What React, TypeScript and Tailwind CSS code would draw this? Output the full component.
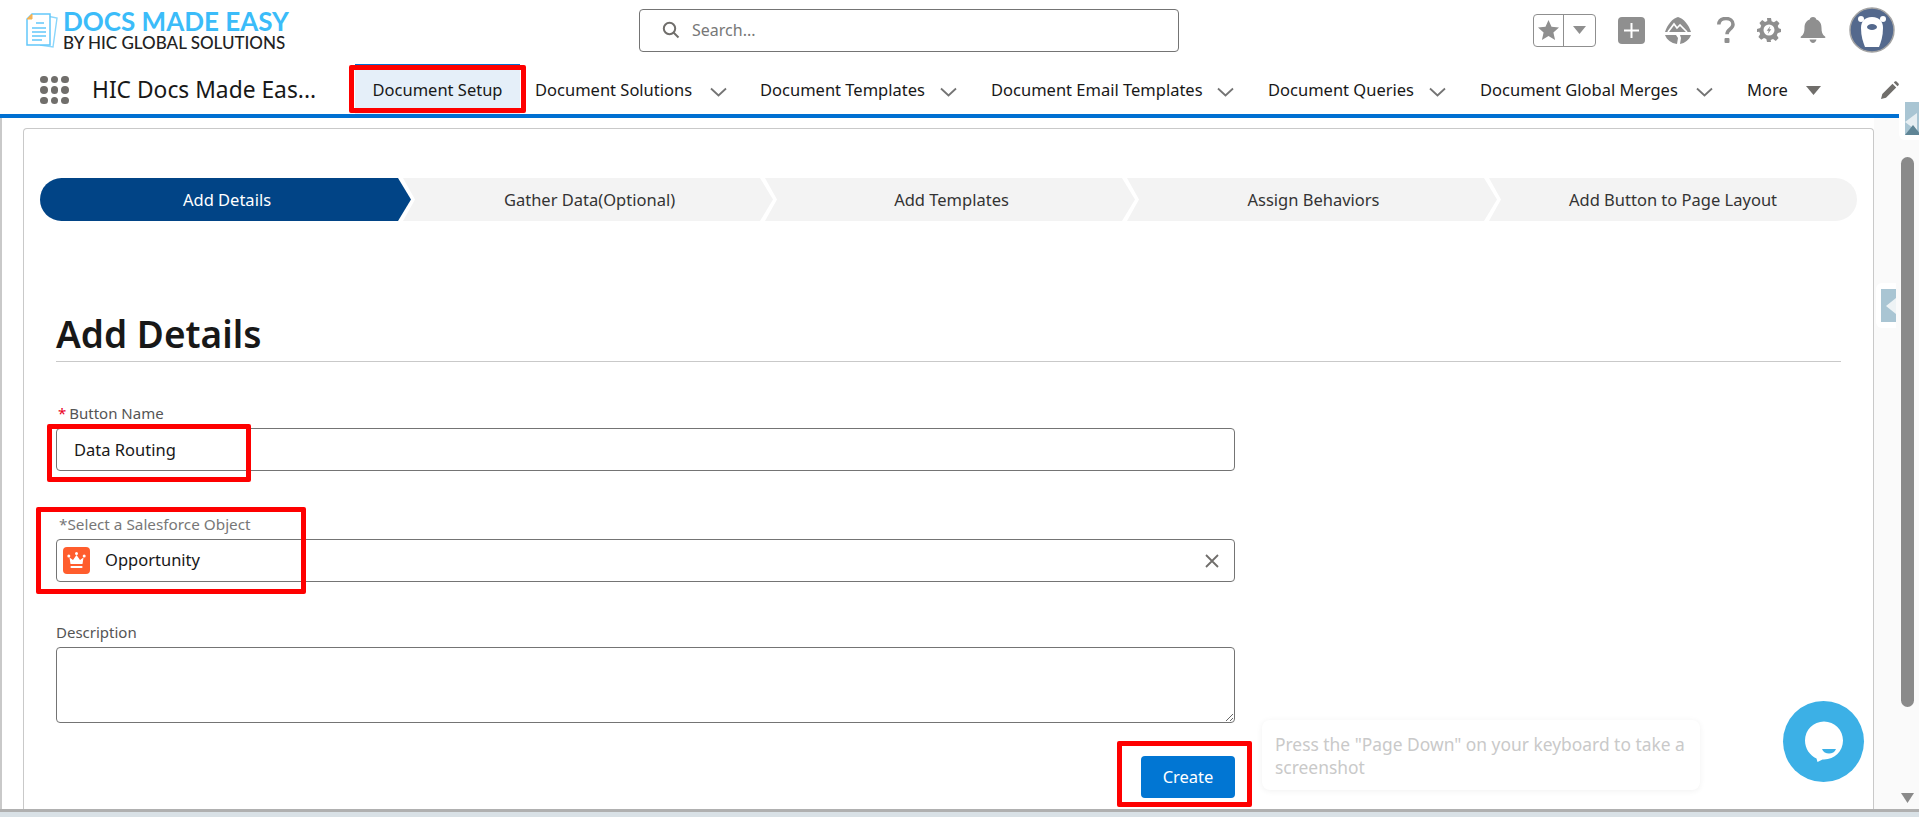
import { ReactNode } from "react";

const navItems = [
  { label: "Document Solutions", className: "w-[225px] gap-[18px]" },
  { label: "Document Templates", className: "w-[231px] gap-[15px]" },
  { label: "Document Email Templates", className: "w-[277px] gap-[14px]" },
  { label: "Document Queries", className: "w-[212px] gap-[15px]" },
  { label: "Document Global Merges", className: "w-[267px] gap-[18px]" },
];

function Chevron() {
  return (
    <svg width="17" height="10" viewBox="0 0 17 10" className="mt-[3px] shrink-0">
      <path d="M1 1.500l7.500 7 7.500-7" fill="none" stroke="#747474" strokeWidth="1.800" />
    </svg>
  );
}

function RedBox({ className }: { className: string }) {
  return <div className={`absolute border-[5px] border-[#fe0000] rounded-[2px] pointer-events-none ${className}`} />;
}

function LogoMark() {
  return (
    <svg width="34" height="37" viewBox="0 0 34 37" className="shrink-0">
      <path d="M22 4l10 2-4 29-13-2" fill="#fff" stroke="#8ad6fb" strokeWidth="1.400" />
      <path d="M7 2h18v31H2V7z" fill="#fff" stroke="#63c8fa" strokeWidth="1.500" />
      <path d="M7 2v5H2z" fill="#f3b356" stroke="#f3b356" />
      <path d="M11 11h8M7 16h14M7 20h14M7 24h14M7 28h10" stroke="#63c8fa" strokeWidth="1.300" />
    </svg>
  );
}

function TopIcons() {
  return (
    <div className="flex items-center">
      <div className="flex items-center w-[63px] h-[33px] border border-[#8f8f8f] rounded-[4px]">
        <div className="w-[30px] h-full flex items-center justify-center border-r border-[#8f8f8f]">
          <svg width="21" height="20" viewBox="0 0 21 20">
            <path d="M10.500 0l3 6.800 7.500.7-5.600 5 1.700 7.500-6.600-3.900L3.900 20l1.700-7.500-5.600-5 7.500-.7z" fill="#8f8f8f" />
          </svg>
        </div>
        <div className="flex-1 flex items-center justify-center">
          <svg width="13" height="8" viewBox="0 0 13 8">
            <path d="M0 0h13L6.500 8z" fill="#8f8f8f" />
          </svg>
        </div>
      </div>
      <div className="ml-[22px] w-[27px] h-[27px] rounded-[4px] bg-[#8f8f8f] flex items-center justify-center">
        <svg width="17" height="17" viewBox="0 0 17 17">
          <path d="M8.500 1v15M1 8.500h15" stroke="#fff" strokeWidth="2" />
        </svg>
      </div>
      <svg width="26" height="27" viewBox="0 0 26 27" className="ml-[20px]">
        <path d="M13 0c5 1 11 8 13 15H0C2 8 8 1 13 0z" fill="#8f8f8f" />
        <path d="M3 15l6-8 3 4 3-3 7 7" fill="none" stroke="#fff" strokeWidth="1.700" />
        <path d="M0 18h11l2 3-1 6c-6-1-10-4-12-9zM26 18H15l1 3-1 6c5-1 9-4 11-9z" fill="#8f8f8f" />
      </svg>
      <svg width="18" height="27" viewBox="0 0 18 27" className="ml-[26px]">
        <path d="M1.800 7.500C2 3.500 5 1.500 9 1.500s7 2.300 7 5.800c0 5-6 4.800-6 10" fill="none" stroke="#8f8f8f" strokeWidth="3.500" />
        <rect x="7.500" y="21" width="5" height="5" rx="1" fill="#8f8f8f" />
      </svg>
      <svg width="24" height="24" viewBox="0 0 24 24" className="ml-[22px]">
        <path
          d="M10 0h4l.6 3.200 2.300 1 2.800-1.800 2.800 2.800-1.800 2.800 1 2.300L24 10.900v3.200l-3.200.9-1 2.300 1.800 2.800-2.800 2.800-2.800-1.800-2.300 1L14 24h-4l-.7-3.100-2.300-1-2.800 1.800-2.800-2.800 1.800-2.800-1-2.300L0 14.100v-3.200l3.200-.9 1-2.300L2.400 4.900l2.800-2.800L8 3.900l2.300-1z"
          fill="#8f8f8f"
        />
        <circle cx="12" cy="12" r="5.500" fill="#fff" />
        <path d="M13.300 8l-3.600 4.800h2l-1 3.200 3.600-4.800h-2z" fill="#8f8f8f" />
      </svg>
      <svg width="26" height="26" viewBox="0 0 26 26" className="ml-[19px]">
        <path d="M13 0c2 0 3 1.200 3.300 2.600C20 4 21.500 7 21.500 11c0 4 .8 6.500 3.500 8.500.8.600.5 1.500-.5 1.500h-23c-1 0-1.300-.9-.5-1.500C3.700 17.500 4.500 15 4.500 11c0-4 1.500-7 5.200-8.400C10 1.200 11 0 13 0z" fill="#8f8f8f" />
        <path d="M9.500 22.500h7c-.5 2-2 3.500-3.500 3.500s-3-1.500-3.500-3.500z" fill="#8f8f8f" />
      </svg>
      <svg width="46" height="46" viewBox="0 0 46 46" className="ml-[23px]">
        <circle cx="23" cy="23" r="22" fill="#54698d" stroke="#a3a3a3" strokeWidth="1.500" />
        <circle cx="12" cy="12" r="3" fill="#fff" />
        <circle cx="34" cy="12" r="3" fill="#fff" />
        <path d="M23 10c8 0 11 5 11 11 0 8-2 14-4 19H16c-2-5-4-11-4-19 0-6 3-11 11-11z" fill="#fff" />
        <ellipse cx="23" cy="20" rx="5" ry="3" fill="#54698d" />
      </svg>
    </div>
  );
}

function Field({ label, children }: { label: ReactNode; children: ReactNode }) {
  return (
    <div>
      <div className="h-[20px] flex items-center text-[15px] text-[#555]">{label}</div>
      <div className="mt-[5px]">{children}</div>
    </div>
  );
}

const steps = [
  { label: "Add Details", className: "w-[371px] pl-[3px] bg-[#014486] text-white rounded-l-[22px] [clip-path:polygon(0_0,358px_0,100%_50%,358px_100%,0_100%)]" },
  { label: "Gather Data(Optional)", className: "w-[370px] pl-[3px] -ml-[8px] bg-[#f3f3f3] text-[#333] [clip-path:polygon(0_0,357px_0,100%_50%,357px_100%,0_100%,12px_50%)]" },
  { label: "Add Templates", className: "w-[370px] pl-[3px] -ml-[8px] bg-[#f3f3f3] text-[#333] [clip-path:polygon(0_0,357px_0,100%_50%,357px_100%,0_100%,12px_50%)]" },
  { label: "Assign Behaviors", className: "w-[370px] pl-[3px] -ml-[8px] bg-[#f3f3f3] text-[#333] [clip-path:polygon(0_0,357px_0,100%_50%,357px_100%,0_100%,12px_50%)]" },
  { label: "Add Button to Page Layout", className: "w-[368px] -ml-[8px] bg-[#f3f3f3] text-[#333] rounded-r-[22px] [clip-path:polygon(0_0,100%_0,100%_100%,0_100%,12px_50%)]" },
];

export default function App() {
  return (
    <div className="relative w-full h-[817px] overflow-hidden flex flex-col bg-white text-[#181818] font-['Noto_Sans','Open_Sans',sans-serif]">
      {/* top bar */}
      <header className="h-[60px] shrink-0 flex items-center pl-[25px] pr-[24px]">
        <div className="flex items-center w-[614px]">
          <LogoMark />
          <div className="ml-[4px]">
            <div className="text-[26px] leading-[25px] font-bold text-[#3bbcf9] whitespace-nowrap font-['Lato','Noto_Sans',sans-serif]">DOCS MADE EASY</div>
            <div className="text-[17px] leading-[17px] font-medium text-[#222] whitespace-nowrap font-['Lato','Noto_Sans',sans-serif]">BY HIC GLOBAL SOLUTIONS</div>
          </div>
        </div>
        <div className="w-[540px] h-[43px] border border-[#747474] rounded-[4px] flex items-center pl-[22px]">
          <svg width="18" height="18" viewBox="0 0 18 18" className="shrink-0">
            <circle cx="7.500" cy="7.500" r="5.700" fill="none" stroke="#706e6b" strokeWidth="2" />
            <path d="M11.500 11.500l5 5" stroke="#706e6b" strokeWidth="2" />
          </svg>
          <input placeholder="Search..." className="ml-[12px] flex-1 outline-none text-[16px] placeholder:text-[#777]" />
        </div>
        <div className="flex-1 flex justify-end">
          <TopIcons />
        </div>
      </header>

      {/* app nav */}
      <nav className="h-[58px] shrink-0 flex items-center pt-[6px] pl-[40px] border-b-4 border-[#0070d2]">
        <div className="grid grid-cols-3 gap-[3px] w-[29px] shrink-0">
          {Array.from({ length: 9 }).map((_, i) => (
            <span key={i} className="w-[7.500px] h-[7.500px] rounded-full bg-[#706e6b]" />
          ))}
        </div>
        <div className="ml-[23px] w-[263px] text-[22.800px] whitespace-nowrap">HIC Docs Made Eas...</div>
        <div className="relative self-end h-[50px] w-[165px] mr-[15px] flex items-center justify-center bg-[#e5eff9] border-t-2 border-[#0070d2] text-[16.500px]">
          Document Setup
          <RedBox className="-left-[6px] -right-[6px] -top-[1px] bottom-[1px]" />
        </div>
        {navItems.map((item) => (
          <div key={item.label} className={`${item.className} shrink-0 flex items-center text-[16.500px] whitespace-nowrap`}>
            {item.label}
            <Chevron />
          </div>
        ))}
        <div className="flex items-center text-[16.500px]">
          More
          <svg width="15" height="9" viewBox="0 0 15 9" className="ml-[18px]">
            <path d="M0 0h15L7.500 9z" fill="#706e6b" />
          </svg>
        </div>
        <svg width="18" height="18" viewBox="0 0 18 18" className="ml-[60px]">
          <path d="M0 18l1.300-5L11.500 2.800l3.700 3.700L5 16.700zM12.800 1.500l1-1c.5-.5 1.200-.5 1.700 0l2 2c.5.5.5 1.200 0 1.700l-1 1z" fill="#706e6b" />
        </svg>
      </nav>

      {/* page body */}
      <main className="flex-1 min-h-0 flex">
        <div className="w-[1874px] shrink-0 pt-[10px] pl-[21px] border-l-2 border-[#c9c9c9]">
          <div className="h-full pt-[49px] pl-[16px] pr-[16px] border border-b-0 border-[#c9c9c9] rounded-t-[4px]">
            <div className="flex h-[43px]">
              {steps.map((step) => (
                <div key={step.label} className={`shrink-0 flex items-center justify-center pt-[2px] text-[16.500px] ${step.className}`}>
                  {step.label}
                </div>
              ))}
            </div>

            <div className="pl-[16px] pr-[16px]">
              <h1 className="mt-[85px] h-[56px] border-b border-[#c9c9c9] text-[37px] leading-[56px] font-semibold">Add Details</h1>

              <div className="w-[1179px]">
                <div className="mt-[41px]">
                  <Field
                    label={
                      <span className="pl-[2px]">
                        <span className="text-[#ea001e] mr-[3px]">*</span>Button Name
                      </span>
                    }
                  >
                    <div className="relative">
                      <input defaultValue="Data Routing" className="w-full h-[43px] border border-[#747474] rounded-[4px] pl-[17px] text-[16.500px] outline-none" />
                      <RedBox className="-left-[9px] top-[-4px] w-[204px] h-[58px]" />
                    </div>
                  </Field>
                </div>

                <div className="relative mt-[43px]">
                  <Field label={<span className="pl-[3px] text-[#777] text-[15.300px]">*Select a Salesforce Object</span>}>
                    <div className="h-[43px] border border-[#747474] rounded-[4px] flex items-center pl-[6px] pr-[15px]">
                      <span className="w-[27px] h-[27px] rounded-[4px] bg-[#ff5d2d] flex items-center justify-center">
                        <svg width="19" height="19" viewBox="0 0 19 19">
                          <circle cx="9.500" cy="2.500" r="1.500" fill="#fff" />
                          <circle cx="1.800" cy="5" r="1.500" fill="#fff" />
                          <circle cx="17.200" cy="5" r="1.500" fill="#fff" />
                          <path d="M2.500 6.500l3.500 2.500 3.500-5 3.500 5 3.500-2.500-1 6.500H3.500z" fill="#fff" />
                          <rect x="3.500" y="15" width="12" height="2" rx=".8" fill="#fff" />
                        </svg>
                      </span>
                      <span className="ml-[15px] flex-1 text-[16.500px]">Opportunity</span>
                      <svg width="14" height="14" viewBox="0 0 14 14">
                        <path d="M1 1l12 12M13 1L1 13" stroke="#706e6b" strokeWidth="1.800" />
                      </svg>
                    </div>
                  </Field>
                  <RedBox className="-left-[20px] -top-[7px] w-[270px] h-[87px]" />
                </div>

                <div className="mt-[40px]">
                  <Field label="Description">
                    <textarea className="block w-full h-[76px] border border-[#747474] rounded-[4px] outline-none" />
                  </Field>
                </div>

                <div className="mt-[33px] flex justify-end">
                  <div className="relative">
                    <button className="w-[94px] h-[42px] pt-[1px] bg-[#0176d3] text-white text-[16.500px] rounded-[4px]">Create</button>
                    <RedBox className="-left-[24px] -right-[17px] -top-[15px] -bottom-[9px]" />
                  </div>
                </div>
              </div>
            </div>
          </div>
        </div>

        {/* scrollbar strip */}
        <div className="flex-1 flex flex-col bg-[#fafafa] pl-[27px] pt-[39px]">
          <div className="w-[13px] h-[550px] rounded-full bg-[#8a8a8a]" />
          <svg width="13" height="10" viewBox="0 0 13 10" className="mt-[86px]">
            <path d="M0 0h13L6.500 10z" fill="#8a8a8a" />
          </svg>
        </div>
      </main>

      <div className="h-[8px] shrink-0 bg-[#d9e1e6] border-t-[3px] border-[#b0b0b0]" />

      {/* floating bits */}
      <div className="absolute left-[1899px] top-[97px] w-[20px] h-[43px] bg-white rounded-l-[6px] pl-[6px] py-[5px]">
        <div className="relative h-full bg-[#a9c5d3] overflow-hidden">
          <div className="absolute left-0 top-[11px] w-0 h-0 border-y-[9px] border-y-transparent border-r-[12px] border-r-[#e6eef2]" />
          <div className="absolute left-0 bottom-0 w-0 h-0 border-x-[8px] border-x-transparent border-b-[10px] border-b-[#5f8596]" />
        </div>
      </div>
      <div className="absolute left-[1876px] top-[283px] w-[20px] h-[45px] bg-white rounded-l-[6px] pl-[5px] py-[6px]">
        <div className="h-full bg-[#a9c5d3] flex items-center justify-end">
          <div className="w-0 h-0 border-y-[8px] border-y-transparent border-r-[10px] border-r-[#eef3f5]" />
        </div>
      </div>

      <div className="absolute left-[1262px] top-[720px] w-[438px] h-[70px] rounded-[8px] bg-white shadow-[0_1px_6px_rgba(0,0,0,0.06)] pl-[13px] pt-[13px] text-[17.400px] leading-[23px] text-[#c9c9c9]">
        Press the "Page Down" on your keyboard to take a screenshot
      </div>

      <div className="absolute left-[1783px] top-[701px] w-[81px] h-[81px] rounded-full bg-[#3cb0e6] flex items-center justify-center">
        <svg width="40" height="42" viewBox="0 0 40 42">
          <path d="M20 .5c10.500 0 19 8.500 19 19s-8.500 19-19 19c-.5 0-1 0-1.500-.1L13.500 41l-1-3.500C5.800 34.500 1 27.500 1 19.500 1 9 9.500.5 20 .5z" fill="#fff" />
          <path d="M18 28h14c-1 3-4 4.500-7 4.500s-6-1.500-7-4.500z" fill="#3cb0e6" />
        </svg>
      </div>
    </div>
  );
}
